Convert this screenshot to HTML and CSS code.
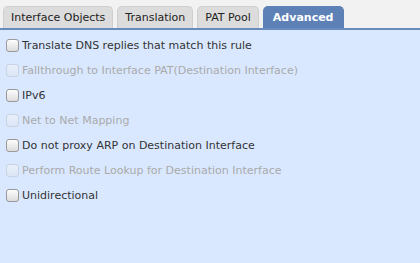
FILE: index.html
```html
<!DOCTYPE html>
<html lang="en">
<head>
    <meta charset="UTF-8">
    <title>Advanced</title>
    <link rel="stylesheet" href="styles.css">
</head>
<body>
    <div class="tabs">
        <div class="tab">Interface Objects</div>
        <div class="tab">Translation</div>
        <div class="tab">PAT Pool</div>
        <div class="tab active">Advanced</div>
    </div>
    <div class="panel">
        <label class="row"><input type="checkbox"> Translate DNS replies that match this rule</label>
        <label class="row disabled"><input type="checkbox" disabled> Fallthrough to Interface PAT(Destination Interface)</label>
        <label class="row"><input type="checkbox"> IPv6</label>
        <label class="row disabled"><input type="checkbox" disabled> Net to Net Mapping</label>
        <label class="row"><input type="checkbox"> Do not proxy ARP on Destination Interface</label>
        <label class="row disabled"><input type="checkbox" disabled> Perform Route Lookup for Destination Interface</label>
        <label class="row"><input type="checkbox"> Unidirectional</label>
    </div>
</body>
</html>
```

FILE: styles.css
```css
body {
    margin: 0;
    padding: 0;
    height: 263px;
    display: flex;
    flex-direction: column;
    background-color: #f2f2f2;
    font-family: "DejaVu Sans", sans-serif;
    font-size: 11px;
    color: #333;
}

.tabs {
    display: flex;
    gap: 4px;
    padding: 6px 0 0 3px;
    border-bottom: 2px solid #6a8cbd;
}

.tab {
    height: 21px;
    line-height: 22px;
    padding: 0 7px;
    background-color: #dcdcdc;
    border: 1px solid #cfcfcf;
    border-bottom: none;
    border-radius: 5px 5px 0 0;
    font-size: 11px;
    color: #222;
}

.tab.active {
    background-color: #5d80b6;
    border-color: #5d80b6;
    color: #fff;
    font-weight: bold;
    padding: 0 9px;
}

.panel {
    flex: 1;
    background-color: #d9e8ff;
    padding: 3px 0 0 6px;
    display: flex;
    flex-direction: column;
}

.row {
    height: 25px;
    display: flex;
    align-items: center;
    gap: 3px;
}

.row input {
    appearance: none;
    margin: 0;
    width: 13px;
    height: 13px;
    border: 1px solid #999;
    border-radius: 3px;
    background: linear-gradient(#fdfdfd, #dcdcdc);
}

.row input:disabled {
    border-color: #c8d3e3;
    background: linear-gradient(#e9f0fb, #dbe5f4);
}

.disabled {
    color: #aaa;
}
```
